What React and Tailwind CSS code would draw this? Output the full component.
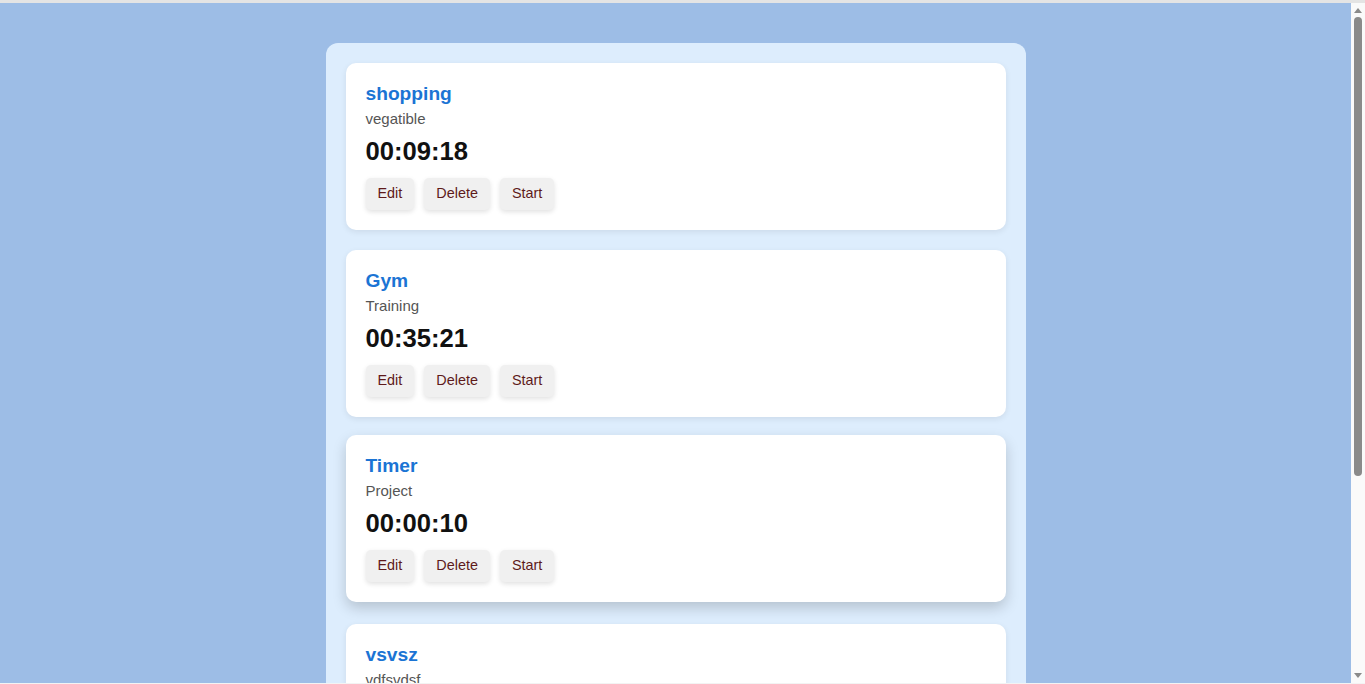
import React, { useState } from "react";

const tasks = [
  { id: 1, title: "shopping", category: "vegatible", time: "00:09:18" },
  { id: 2, title: "Gym", category: "Training", time: "00:35:21" },
  { id: 3, title: "Timer", category: "Project", time: "00:00:10" },
  { id: 4, title: "vsvsz", category: "vdfsvdsf", time: "00:00:00" },
];

const TaskCard = ({ task, hovered }) => {
  return (
    <div
      className={
        hovered
          ? "bg-white rounded-[10px] p-5 flex flex-col -translate-y-0.5 shadow-[0_6px_14px_rgba(0,0,0,0.18)]"
          : "bg-white rounded-[10px] p-5 flex flex-col shadow-[0_2px_6px_rgba(0,0,0,0.08)]"
      }
    >
      <h3 className="text-[19.2px] leading-[22px] font-bold text-[#1b74d4]">
        {task.title}
      </h3>
      <p className="mt-[5px] text-[15px] leading-[17px] text-[#555]">
        {task.category}
      </p>
      <div className="mt-[10px] text-[25.6px] leading-[29px] font-bold text-[#111]">
        {task.time}
      </div>
      <div className="mt-[12px] flex gap-[10px]">
        <button className="h-8 px-3 rounded-[5px] bg-[#f0f0f0] text-[14.4px] text-[#5e1a1a] shadow-[0_2px_5px_rgba(0,0,0,0.12)]">
          Edit
        </button>
        <button className="h-8 px-3 rounded-[5px] bg-[#f0f0f0] text-[14.4px] text-[#5e1a1a] shadow-[0_2px_5px_rgba(0,0,0,0.12)]">
          Delete
        </button>
        <button className="h-8 px-3 rounded-[5px] bg-[#f0f0f0] text-[14.4px] text-[#5e1a1a] shadow-[0_2px_5px_rgba(0,0,0,0.12)]">
          Start
        </button>
      </div>
    </div>
  );
};

export default function App() {
  const [hoverId] = useState(3);

  return (
    <div className="h-screen flex flex-col bg-[#f3f3f3] font-['Liberation_Sans',Arial,sans-serif]">
      <div className="h-[3px] bg-[#e4e4e4]"></div>
      <div className="flex-1 min-h-0 flex">
        <div className="flex-1 overflow-hidden bg-[#9dbde6]">
          <div className="pt-10 pb-10 flex justify-center">
            <div className="w-[700px] bg-[#ddedfd] rounded-[12px] p-5 flex flex-col gap-5">
              {tasks.map((t) => (
                <TaskCard key={t.id} task={t} hovered={t.id === hoverId} />
              ))}
            </div>
          </div>
        </div>
        {/* scrollbar */}
        <div className="w-[14px] bg-[#fafafa] flex flex-col items-center">
          <div className="mt-[5px] w-0 h-0 border-x-[4px] border-x-transparent border-b-[5px] border-b-[#8a8a8a]"></div>
          <div className="mt-[4px] w-[8px] h-[459px] rounded-full bg-[#8a8a8a]"></div>
          <div className="flex-1"></div>
          <div className="mb-[5px] w-0 h-0 border-x-[4px] border-x-transparent border-t-[5px] border-t-[#8a8a8a]"></div>
        </div>
      </div>
      <div className="h-[1px] bg-[#f3f3f3]"></div>
    </div>
  );
}
